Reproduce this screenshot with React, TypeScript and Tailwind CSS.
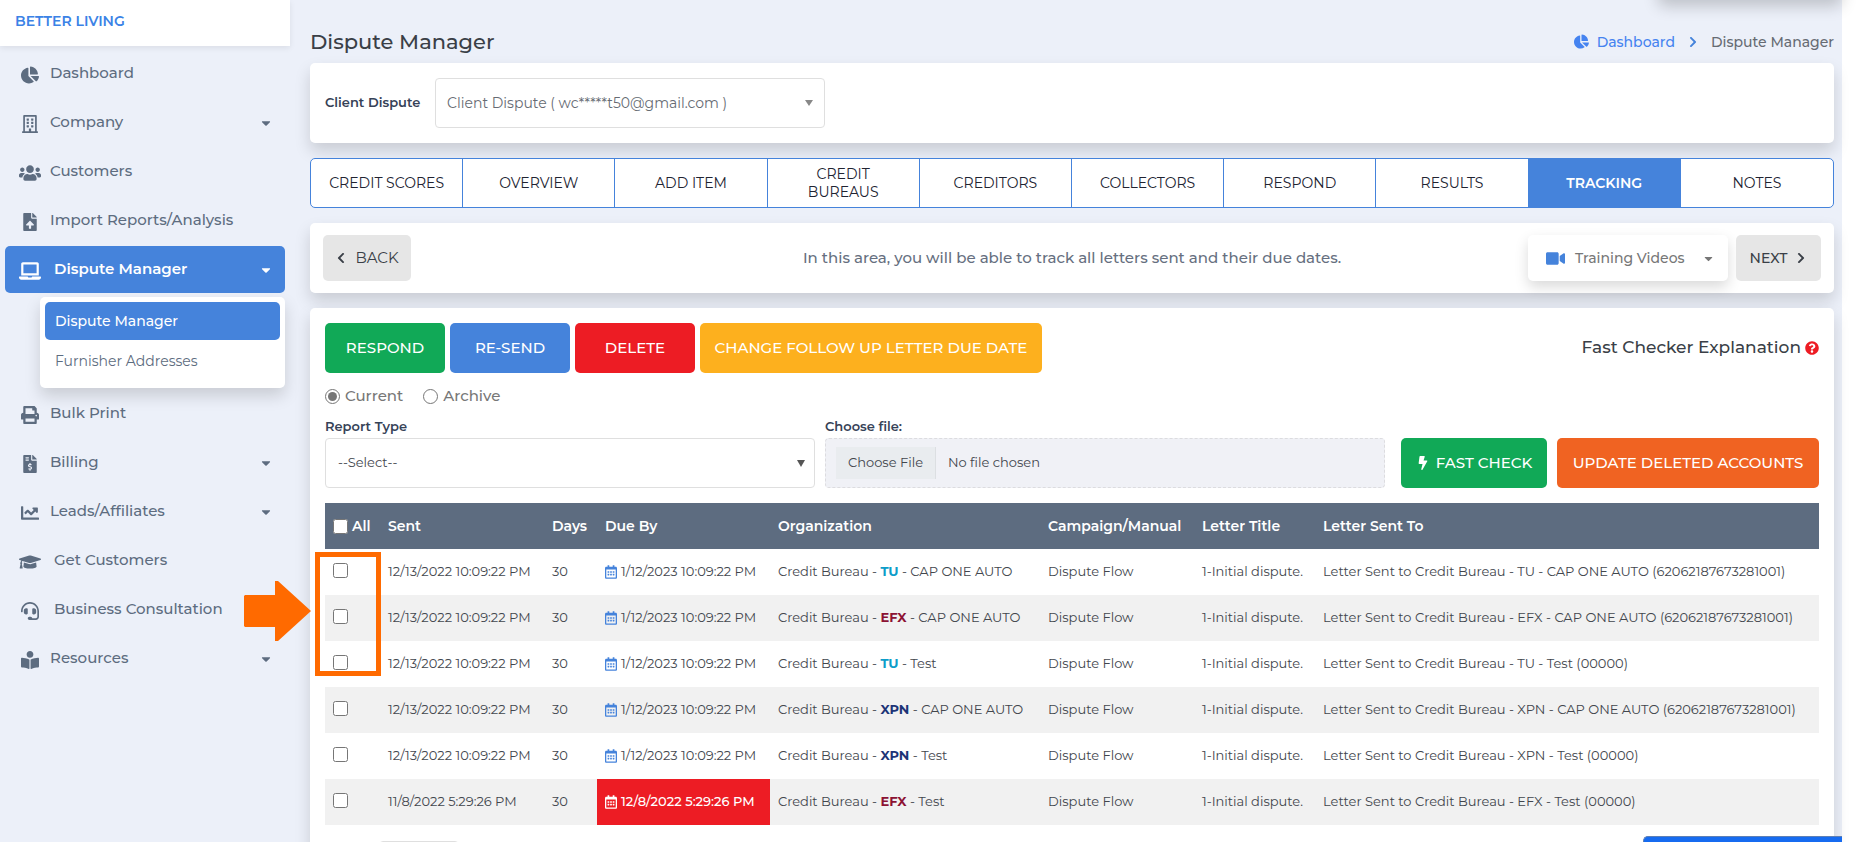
import type { ReactNode } from "react";
import clsx from "clsx";
import type { IconType } from "react-icons";
import {
  FaBolt,
  FaBookReader,
  FaCaretDown,
  FaChartLine,
  FaChartPie,
  FaChevronLeft,
  FaChevronRight,
  FaFileInvoiceDollar,
  FaFileUpload,
  FaGraduationCap,
  FaHeadset,
  FaLaptop,
  FaPrint,
  FaQuestionCircle,
  FaRegBuilding,
  FaRegCalendarAlt,
  FaUsers,
  FaVideo,
} from "react-icons/fa";

type NavEntry = {
  label: string;
  icon: IconType;
  size?: string;
  wide?: boolean;
  menu?: boolean;
  children?: string[];
};

const NAV: NavEntry[] = [
  { label: "Dashboard", icon: FaChartPie },
  { label: "Company", icon: FaRegBuilding, menu: true },
  { label: "Customers", icon: FaUsers, size: "size-[22px]" },
  { label: "Import Reports/Analysis", icon: FaFileUpload },
  {
    label: "Dispute Manager",
    icon: FaLaptop,
    size: "size-[22px]",
    wide: true,
    menu: true,
    children: ["Dispute Manager", "Furnisher Addresses"],
  },
  { label: "Bulk Print", icon: FaPrint },
  { label: "Billing", icon: FaFileInvoiceDollar, menu: true },
  { label: "Leads/Affiliates", icon: FaChartLine, menu: true },
  { label: "Get Customers", icon: FaGraduationCap, size: "size-[22px]", wide: true },
  { label: "Business Consultation", icon: FaHeadset, wide: true },
  { label: "Resources", icon: FaBookReader, menu: true },
];

const TABS = [
  "CREDIT SCORES",
  "OVERVIEW",
  "ADD ITEM",
  "CREDIT BUREAUS",
  "CREDITORS",
  "COLLECTORS",
  "RESPOND",
  "RESULTS",
  "TRACKING",
  "NOTES",
];

const ACTIONS = [
  { label: "RESPOND", style: "bg-[#11a957] min-w-[120px]" },
  { label: "RE-SEND", style: "bg-[#4583db] min-w-[120px]" },
  { label: "DELETE", style: "bg-[#ed1c24] min-w-[120px]" },
  { label: "CHANGE FOLLOW UP LETTER DUE DATE", style: "bg-[#fdb01e] min-w-[342px]" },
];

const BUREAU_COLOR: Record<string, string> = {
  TU: "text-[#0d9dc9]",
  EFX: "text-[#8c1233]",
  XPN: "text-[#1d3477]",
};

const LETTERS = [
  { sent: "12/13/2022 10:09:22 PM", due: "1/12/2023 10:09:22 PM", bureau: "TU", account: "CAP ONE AUTO", number: "62062187673281001" },
  { sent: "12/13/2022 10:09:22 PM", due: "1/12/2023 10:09:22 PM", bureau: "EFX", account: "CAP ONE AUTO", number: "62062187673281001" },
  { sent: "12/13/2022 10:09:22 PM", due: "1/12/2023 10:09:22 PM", bureau: "TU", account: "Test", number: "00000" },
  { sent: "12/13/2022 10:09:22 PM", due: "1/12/2023 10:09:22 PM", bureau: "XPN", account: "CAP ONE AUTO", number: "62062187673281001" },
  { sent: "12/13/2022 10:09:22 PM", due: "1/12/2023 10:09:22 PM", bureau: "XPN", account: "Test", number: "00000" },
  { sent: "11/8/2022 5:29:26 PM", due: "12/8/2022 5:29:26 PM", bureau: "EFX", account: "Test", number: "00000", overdue: true },
];

function Card({ className, children }: { className?: string; children: ReactNode }) {
  return (
    <section className={clsx("rounded-[5px] bg-white shadow-[0_8px_16px_rgba(0,0,0,0.15)]", className)}>
      {children}
    </section>
  );
}

function Sidebar() {
  return (
    <aside className="w-[290px] shrink-0">
      <div className="h-[46px] bg-white px-[15px] pt-3 shadow-[0_2px_6px_rgba(0,0,0,0.08)]">
        <a href="#" className="block text-sm leading-[18px] font-semibold text-[#3b82e6]">
          BETTER LIVING
        </a>
      </div>
      <nav className="flex flex-col gap-[2px] px-[5px] pt-1">
        {NAV.map(({ label, icon: Icon, size, wide, menu, children }) => (
          <div key={label}>
            <a
              href="#"
              className={clsx(
                "flex h-[47px] items-center rounded-[5px] pr-3 pl-[13px] text-[15px]",
                children ? "bg-[#4583db] font-semibold text-white" : "font-medium text-[#5d6c80]",
              )}
            >
              <span className={clsx("flex shrink-0", wide ? "w-9" : "w-8")}>
                <span className="flex w-6 justify-center pt-[2px]">
                  <Icon className={size ?? "size-[18px]"} />
                </span>
              </span>
              <span className="flex-1">{label}</span>
              {menu && <FaCaretDown className="size-[14px]" />}
            </a>
            {children && (
              <div className="mt-1 ml-[35px] rounded-[5px] bg-white px-[5px] pt-[5px] pb-2 text-sm shadow-[0_8px_16px_rgba(0,0,0,0.15)]">
                {children.map((child, i) => (
                  <a
                    key={child}
                    href="#"
                    className={clsx(
                      "flex h-[38px] items-center rounded-[5px] px-[10px]",
                      i === 0 ? "bg-[#4583db] font-medium text-white" : "mt-[2px] text-[#5d6c80]",
                    )}
                  >
                    {child}
                  </a>
                ))}
              </div>
            )}
          </div>
        ))}
      </nav>
    </aside>
  );
}

function LetterTable() {
  return (
    <div className="relative mt-[15px]">
      <table className="w-full table-fixed text-left text-[13px] whitespace-nowrap text-[#42464d]">
        <colgroup>
          <col className="w-[55px]" />
          <col className="w-[164px]" />
          <col className="w-[53px]" />
          <col className="w-[173px]" />
          <col className="w-[270px]" />
          <col className="w-[154px]" />
          <col className="w-[121px]" />
          <col />
        </colgroup>
        <thead>
          <tr className="h-[46px] bg-[#5d6c80] text-sm text-white">
            <th className="px-2 font-semibold">
              <label className="flex items-center gap-1">
                <input type="checkbox" className="size-[15px] shrink-0" />
                All
              </label>
            </th>
            <th className="px-2 font-semibold">Sent</th>
            <th className="px-2 font-semibold">Days</th>
            <th className="px-2 font-semibold">Due By</th>
            <th className="px-2 font-semibold">Organization</th>
            <th className="px-2 font-semibold">Campaign/Manual</th>
            <th className="px-2 font-semibold">Letter Title</th>
            <th className="px-2 font-semibold">Letter Sent To</th>
          </tr>
        </thead>
        <tbody>
          {LETTERS.map((row, i) => (
            <tr key={i} className="h-[46px] even:bg-[#f1f1f1]">
              <td className="px-2 pb-1">
                <input
                  type="checkbox"
                  aria-label={`Select letter ${i + 1}`}
                  className="block size-[15px]"
                />
              </td>
              <td className="px-2">{row.sent}</td>
              <td className="px-2">30</td>
              <td className={clsx("px-2", row.overdue && "bg-[#ed1c24] font-medium text-white")}>
                <span className="flex items-center gap-1">
                  <FaRegCalendarAlt className={clsx("h-[14px] w-3", !row.overdue && "text-[#4583db]")} />
                  {row.due}
                </span>
              </td>
              <td className="px-2">
                Credit Bureau - <b className={BUREAU_COLOR[row.bureau]}>{row.bureau}</b> - {row.account}
              </td>
              <td className="px-2">Dispute Flow</td>
              <td className="px-2">1-Initial dispute.</td>
              <td className="px-2">
                Letter Sent to Credit Bureau - {row.bureau} - {row.account} ({row.number})
              </td>
            </tr>
          ))}
        </tbody>
      </table>

      {/* callout around the first three checkboxes */}
      <div className="pointer-events-none absolute top-[49px] -left-[10px] h-[124px] w-[66px] border-5 border-[#ff6a00]" />
      <svg viewBox="0 0 67 60" className="pointer-events-none absolute top-[78px] -left-[81px] h-[60px] w-[67px]">
        <path d="M1 14H31V0H34L67 30L34 60H31V46H1L0 45V15Z" fill="#ff6a00" />
      </svg>
    </div>
  );
}

export default function App() {
  return (
    <div className="h-screen overflow-hidden bg-white pr-5 font-[Montserrat,Inter,sans-serif]">
      <div className="relative flex min-h-full bg-[#ecf0f9]">
        <Sidebar />

        <main className="min-w-0 flex-1 pr-2 pl-5">
          <header className="flex h-[63px] items-center justify-between pt-5">
            <h1 className="text-[21px] font-medium text-[#3a3f47]">Dispute Manager</h1>
            <div className="flex items-center text-sm font-medium text-[#666b73]">
              <a href="#" className="flex items-center gap-2 text-[#4583f0]">
                <FaChartPie className="size-[15px]" />
                Dashboard
              </a>
              <FaChevronRight className="mx-3 size-3 text-[#4583db]" />
              <span>Dispute Manager</span>
            </div>
          </header>

          <Card className="flex items-center gap-[10px] p-[15px]">
            <label htmlFor="client" className="w-[100px] text-[13px] font-semibold text-[#364257]">
              Client Dispute
            </label>
            <div className="relative w-[390px]">
              <select
                id="client"
                className="h-[50px] w-full appearance-none rounded border border-[#dfdfdf] bg-white px-[11px] text-sm text-[#666b73]"
              >
                <option>Client Dispute ( wc*****t50@gmail.com )</option>
              </select>
              <span className="pointer-events-none absolute top-[22px] right-3 border-x-4 border-t-[6px] border-x-transparent border-t-[#888]" />
            </div>
          </Card>

          <div className="mt-[15px] grid h-[50px] grid-cols-10 divide-x divide-[#4583db] overflow-hidden rounded-[5px] border border-[#4583db] bg-white">
            {TABS.map((tab) => (
              <button
                key={tab}
                className={clsx(
                  "text-sm leading-[18px]",
                  tab === "CREDIT BUREAUS" ? "px-8" : "px-3",
                  tab === "TRACKING" ? "bg-[#4583db] font-semibold text-white" : "text-[#212331]",
                )}
              >
                {tab}
              </button>
            ))}
          </div>

          <Card className="mt-[15px] grid grid-cols-[1fr_auto_1fr] items-center px-[13px] py-3">
            <button className="flex h-[46px] w-[88px] items-center justify-center gap-2 rounded-[5px] bg-[#e6e6e6] text-[15px] text-[#3a3f47]">
              <FaChevronLeft className="size-3" />
              BACK
            </button>
            <p className="text-[15px] font-medium text-[#666f80]">
              In this area, you will be able to track all letters sent and their due dates.
            </p>
            <div className="flex justify-end gap-2 text-sm">
              <button className="flex h-[46px] w-[200px] items-center rounded-[5px] bg-white pr-[13px] pl-[18px] font-medium text-[#777] shadow-[0_6px_14px_rgba(0,0,0,0.15)]">
                <FaVideo className="mr-[10px] size-[19px] text-[#4583db]" />
                <span className="flex-1 text-left">Training Videos</span>
                <FaCaretDown className="size-[13px]" />
              </button>
              <button className="flex h-[46px] w-[85px] items-center justify-center gap-2 rounded-[5px] bg-[#e6e6e6] font-medium text-[#3a3f47]">
                NEXT
                <FaChevronRight className="size-3" />
              </button>
            </div>
          </Card>

          <Card className="mt-[15px] p-[15px]">
            <div className="flex items-center gap-[5px]">
              {ACTIONS.map((a) => (
                <button key={a.label} className={clsx("h-[50px] rounded-[5px] text-[15px] font-medium text-white", a.style)}>
                  {a.label}
                </button>
              ))}
              <a href="#" className="ml-auto flex items-center gap-1 text-[17px] font-medium text-[#3a3f47]">
                Fast Checker Explanation
                <FaQuestionCircle className="size-[14px] text-[#ed1c24]" />
              </a>
            </div>

            <div className="mt-[13px] flex h-5 items-center gap-5 text-[15px] font-medium text-[#777]">
              <label className="flex items-center gap-[5px]">
                <input type="radio" name="scope" defaultChecked className="size-[15px] accent-[#767676]" />
                Current
              </label>
              <label className="flex items-center gap-[5px]">
                <input type="radio" name="scope" className="size-[15px]" />
                Archive
              </label>
            </div>

            <div className="mt-2 flex items-end">
              <div className="min-w-0 flex-[7]">
                <label htmlFor="report-type" className="block text-[13px] leading-6 font-semibold text-[#364257]">
                  Report Type
                </label>
                <div className="relative">
                  <select
                    id="report-type"
                    className="h-[50px] w-full appearance-none rounded border border-[#dfdfdf] bg-white px-3 text-[13px] text-[#42464d]"
                  >
                    <option>--Select--</option>
                  </select>
                  <span className="pointer-events-none absolute top-[22px] right-[10px] border-x-4 border-t-[7px] border-x-transparent border-t-[#555]" />
                </div>
              </div>
              <div className="ml-[10px] min-w-0 flex-[8]">
                <label htmlFor="file" className="block text-[13px] leading-6 font-semibold text-[#364257]">
                  Choose file:
                </label>
                <input
                  id="file"
                  type="file"
                  className="block h-[50px] w-full rounded border border-dashed border-[#dcdcdf] bg-[#f0f1f6] px-[10px] py-2 text-[13px] text-[#42464d] file:mr-3 file:h-8 file:border-r file:border-[#dcdfe2] file:bg-[#e9ecef] file:px-3"
                />
              </div>
              <button className="ml-4 flex h-[50px] w-[146px] items-center justify-center gap-1.5 rounded-[5px] bg-[#11a957] text-[15px] font-medium text-white">
                <FaBolt className="size-[14px]" />
                FAST CHECK
              </button>
              <button className="ml-[10px] h-[50px] w-[262px] rounded-[5px] bg-[#f06322] text-[15px] font-medium text-white">
                UPDATE DELETED ACCOUNTS
              </button>
            </div>

            <LetterTable />

            <select
              aria-label="Rows per page"
              className="mt-4 ml-[54px] h-8 w-[80px] rounded border border-[#dfdfdf] bg-white px-2 text-[13px]"
            >
              <option>10</option>
            </select>
          </Card>
        </main>

        {/* account bar, slid up out of view, and the collapsed chat tab */}
        <div className="absolute -top-10 right-0 h-10 w-[184px] rounded-[5px] bg-white shadow-[0_6px_16px_rgba(0,0,0,0.2)]" />
        <button
          aria-label="Open chat"
          className="fixed right-5 bottom-0 h-[6px] w-[199px] rounded-tl-[5px] border-t border-l border-[#5d7fb5] bg-[#166bf0]"
        />
      </div>
    </div>
  );
}
